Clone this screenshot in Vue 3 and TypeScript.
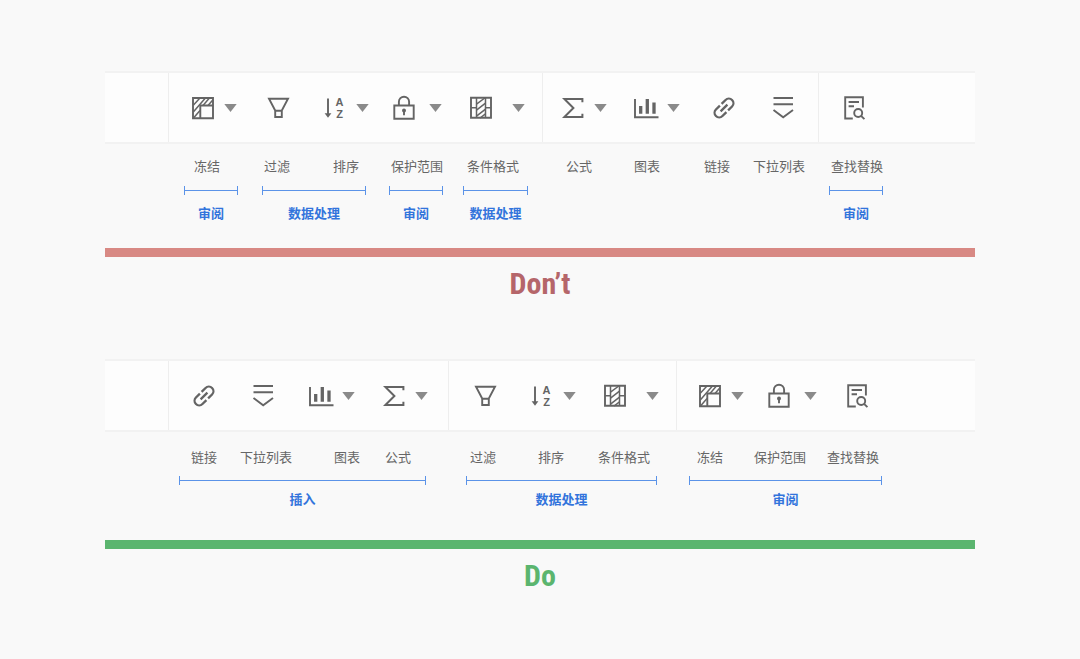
<script setup lang="ts">
type IconName = 'freeze' | 'filter' | 'sort' | 'lock' | 'format' | 'sum' | 'chart' | 'link' | 'dropdown' | 'find'

interface Tool {
  icon: IconName
  name: string
  at: number
  caret?: 'near' | 'mid' | 'far'
}
interface Section {
  at: number
  end: number
  tools: Tool[]
}
interface Caption {
  text: string
  at: number
}
interface Span {
  text: string
  at: number
  end: number
}
interface Example {
  kind: 'dont' | 'do'
  title: string
  sections: Section[]
  captions: Caption[]
  spans: Span[]
}

// Positions are shares of a board that is 870 units wide.
const BOARD = 870

const examples: Example[] = [
  {
    kind: 'dont',
    title: 'Don’t',
    sections: [
      { at: 0, end: 64, tools: [] },
      {
        at: 64,
        end: 438,
        tools: [
          { icon: 'freeze', name: '冻结', at: 86, caret: 'near' },
          { icon: 'filter', name: '过滤', at: 161 },
          { icon: 'sort', name: '排序', at: 218, caret: 'near' },
          { icon: 'lock', name: '保护范围', at: 287, caret: 'mid' },
          { icon: 'format', name: '条件格式', at: 364, caret: 'far' },
        ],
      },
      {
        at: 438,
        end: 714,
        tools: [
          { icon: 'sum', name: '公式', at: 456, caret: 'near' },
          { icon: 'chart', name: '图表', at: 529, caret: 'near' },
          { icon: 'link', name: '链接', at: 607 },
          { icon: 'dropdown', name: '下拉列表', at: 666 },
        ],
      },
      { at: 714, end: 870, tools: [{ icon: 'find', name: '查找替换', at: 737 }] },
    ],
    captions: [
      { text: '冻结', at: 89 },
      { text: '过滤', at: 159 },
      { text: '排序', at: 228 },
      { text: '保护范围', at: 286 },
      { text: '条件格式', at: 362 },
      { text: '公式', at: 461 },
      { text: '图表', at: 529 },
      { text: '链接', at: 599 },
      { text: '下拉列表', at: 648 },
      { text: '查找替换', at: 726 },
    ],
    spans: [
      { text: '审阅', at: 79, end: 133 },
      { text: '数据处理', at: 157, end: 261 },
      { text: '审阅', at: 284, end: 338 },
      { text: '数据处理', at: 358, end: 423 },
      { text: '审阅', at: 724, end: 778 },
    ],
  },
  {
    kind: 'do',
    title: 'Do',
    sections: [
      { at: 0, end: 64, tools: [] },
      {
        at: 64,
        end: 344,
        tools: [
          { icon: 'link', name: '链接', at: 87 },
          { icon: 'dropdown', name: '下拉列表', at: 146 },
          { icon: 'chart', name: '图表', at: 204, caret: 'near' },
          { icon: 'sum', name: '公式', at: 277, caret: 'near' },
        ],
      },
      {
        at: 344,
        end: 572,
        tools: [
          { icon: 'filter', name: '过滤', at: 368 },
          { icon: 'sort', name: '排序', at: 425, caret: 'near' },
          { icon: 'format', name: '条件格式', at: 498, caret: 'far' },
        ],
      },
      {
        at: 572,
        end: 870,
        tools: [
          { icon: 'freeze', name: '冻结', at: 593, caret: 'near' },
          { icon: 'lock', name: '保护范围', at: 662, caret: 'mid' },
          { icon: 'find', name: '查找替换', at: 740 },
        ],
      },
    ],
    captions: [
      { text: '链接', at: 86 },
      { text: '下拉列表', at: 135 },
      { text: '图表', at: 229 },
      { text: '公式', at: 280 },
      { text: '过滤', at: 365 },
      { text: '排序', at: 433 },
      { text: '条件格式', at: 493 },
      { text: '冻结', at: 592 },
      { text: '保护范围', at: 649 },
      { text: '查找替换', at: 722 },
    ],
    spans: [
      { text: '插入', at: 74, end: 321 },
      { text: '数据处理', at: 361, end: 552 },
      { text: '审阅', at: 584, end: 777 },
    ],
  },
]

function tracks(edges: number[]) {
  const sizes = edges.slice(1).map((edge, i) => `minmax(0, ${edge - edges[i]}fr)`)
  return { gridTemplateColumns: sizes.join(' ') }
}
const sectionTracks = (e: Example) => tracks([0, ...e.sections.map((s) => s.end)])
const toolTracks = (s: Section) => tracks([s.at, ...s.tools.map((t) => t.at), s.end])
const captionTracks = (e: Example) => tracks([0, ...e.captions.map((c) => c.at), BOARD])
const spanTracks = (e: Example) => tracks([0, ...e.spans.flatMap((s) => [s.at, s.end]), BOARD])
const column = (n: number) => ({ gridColumn: String(n) })
</script>

<template>
  <main class="page">
    <section v-for="example in examples" :key="example.kind" class="example" :class="example.kind">
      <div class="toolbar" role="toolbar" :style="sectionTracks(example)">
        <div v-for="section in example.sections" :key="section.at" class="section" :style="toolTracks(section)">
          <button
            v-for="(tool, i) in section.tools"
            :key="tool.icon"
            type="button"
            class="tool"
            :class="tool.caret"
            :aria-label="tool.name"
            :style="column(i + 2)"
          >
            <svg class="icon" viewBox="0 0 24 24" aria-hidden="true">
              <template v-if="tool.icon === 'freeze'">
                <path d="M2 2H22V22.3H2Z M22 9.5H9.3V22.3" />
                <path class="fine" d="M2.5 9L8.5 2.5 M2.5 15.8L14 2.5 M2.5 22L9 14.5 M12 9.5L18 2.5 M17 9.5L22 3.8" />
              </template>
              <path v-else-if="tool.icon === 'filter'" d="M3 2.8H22L15.8 14.5V21H9.2V14.5Z M9.2 14.8H15.8" />
              <template v-else-if="tool.icon === 'sort'">
                <path d="M5 2.5V19" />
                <path class="solid" d="M1.6 17.2H8.4L5 21.8Z" />
                <text x="16.5" y="10">A</text>
                <text x="16.5" y="22">Z</text>
              </template>
              <template v-else-if="tool.icon === 'lock'">
                <path d="M2.3 9.5H21.7V22.7H2.3Z M6.9 9.5V5.8A5.1 5.1 0 0 1 17.1 5.8V9.5" />
                <path d="M12 15V19.2" />
                <circle class="solid" cx="12" cy="14.6" r="2" />
              </template>
              <template v-else-if="tool.icon === 'format'">
                <path d="M2 1.8H22V21.8H2Z" />
                <path class="fine" d="M7.5 1.8V22 M16.5 1.8V22 M2 11.8H7.5 M16.5 11.8H22" />
                <path class="fine" d="M7.5 8.2L15.8 2 M7.5 14.2L16.5 7.2 M7.5 20.2L16.5 13.2 M11 22L16.5 17.8" />
              </template>
              <path v-else-if="tool.icon === 'sum'" class="bold" d="M21.4 6.2V3H3.4L12.4 12L3.4 21H21.4V17.8" />
              <template v-else-if="tool.icon === 'chart'">
                <path d="M1 3V21.3H24.5" />
                <path class="bar" d="M6.7 10V17.8 M13.3 3V17.8 M20 6.5V17.8" />
              </template>
              <path
                v-else-if="tool.icon === 'link'"
                class="heavy"
                transform="rotate(-45 12 12)"
                d="M10.8 7.4H5.2A4.6 4.6 0 0 0 5.2 16.6H10.8 M13.2 7.4H18.8A4.6 4.6 0 0 1 18.8 16.6H13.2 M7.2 12H16.8"
              />
              <path v-else-if="tool.icon === 'dropdown'" d="M2.5 2H22 M2.5 8.3H22 M2.5 14L12.2 21.3L22 14" />
              <template v-else>
                <path d="M10.8 22.5H3.2V1.2H20.9V11.5 M6.6 6H17 M6.6 10.3H12" />
                <circle cx="16.2" cy="17" r="4" />
                <path d="M19.1 19.9L22.4 23.2" />
              </template>
            </svg>
            <svg v-if="tool.caret" class="caret" viewBox="0 0 13 8" aria-hidden="true">
              <path d="M0.3 0H12.7L6.5 8Z" />
            </svg>
          </button>
        </div>
      </div>

      <div class="captions" :style="captionTracks(example)">
        <span v-for="(caption, i) in example.captions" :key="caption.text" class="caption" :style="column(i + 2)">{{ caption.text }}</span>
      </div>

      <div class="spans" :style="spanTracks(example)">
        <div v-for="(span, i) in example.spans" :key="span.at" class="span" :style="column(i * 2 + 2)">
          <div class="bracket"></div>
          <span class="group">{{ span.text }}</span>
        </div>
      </div>

      <h2 class="title">{{ example.title }}</h2>
    </section>
  </main>
</template>

<style>
body {
  margin: 0;
  background: #f9f9f9;
}
</style>

<style scoped>
.page {
  box-sizing: border-box;
  min-height: 100vh;
  padding: 71px 105px 40px;
  display: flex;
  flex-direction: column;
  gap: 55px;
  background: #f9f9f9;
  font-family: "Liberation Sans", "Noto Sans CJK SC", sans-serif;
}
.example {
  --caption-gap: 13px;
  --bracket-gap: 9px;
  --group-gap: 9px;
  --bar-gap: 24px;
  --bar: #d88984;
  --title: #b5666a;
}
.example.do {
  --caption-gap: 16px;
  --bracket-gap: 8px;
  --group-gap: 5px;
  --bar-gap: 30px;
  --bar: #5bb56f;
  --title: #5bb56f;
}
.toolbar {
  box-sizing: border-box;
  display: grid;
  height: 73px;
  background: #fdfdfd;
  border-top: 2px solid #f2f2f2;
  border-bottom: 2px solid #f2f2f2;
}
.section {
  box-sizing: border-box;
  display: grid;
  align-items: center;
}
.section:not(:last-child) {
  box-shadow: inset -1px 0 #eeeeee;
}
.tool {
  display: flex;
  align-items: center;
  justify-self: start;
  gap: 9px;
  padding: 0;
  border: 0;
  background: none;
  cursor: pointer;
}
.tool.mid {
  gap: 13px;
}
.tool.far {
  gap: 19px;
}
.icon {
  flex: none;
  width: 24px;
  height: 24px;
  overflow: visible;
  fill: none;
  stroke: #646464;
  stroke-width: 1.9;
}
.icon .fine {
  stroke-width: 1.5;
}
.icon .bold {
  stroke-width: 2;
}
.icon .heavy {
  stroke-width: 2.3;
}
.icon .bar {
  stroke-width: 3.3;
}
.icon .solid {
  fill: #646464;
  stroke: none;
}
.icon text {
  fill: #646464;
  stroke: none;
  font: bold 11px "Liberation Sans", sans-serif;
  text-anchor: middle;
}
.caret {
  flex: none;
  width: 13px;
  height: 8px;
  fill: #8a8a8a;
}
.captions {
  display: grid;
  margin-top: var(--caption-gap);
}
.caption {
  white-space: nowrap;
  font-size: 13px;
  line-height: 20px;
  color: #666666;
}
.spans {
  display: grid;
  margin-top: var(--bracket-gap);
}
.span {
  display: flex;
  flex-direction: column;
  align-items: center;
  gap: var(--group-gap);
}
.bracket {
  box-sizing: border-box;
  align-self: stretch;
  height: 9px;
  border: solid #5b93e8;
  border-width: 0 1px;
  background: linear-gradient(#5b93e8, #5b93e8) center / 100% 1px no-repeat;
}
.group {
  white-space: nowrap;
  font-size: 13px;
  line-height: 20px;
  font-weight: 700;
  color: #3274dc;
}
.title {
  margin: var(--bar-gap) 0 0;
  padding-top: 7px;
  border-top: 9px solid var(--bar);
  text-align: center;
  font-family: "Roboto Condensed", "Open Sans Condensed", Roboto, sans-serif;
  font-size: 30px;
  line-height: 40px;
  font-weight: 700;
  color: var(--title);
}
</style>
